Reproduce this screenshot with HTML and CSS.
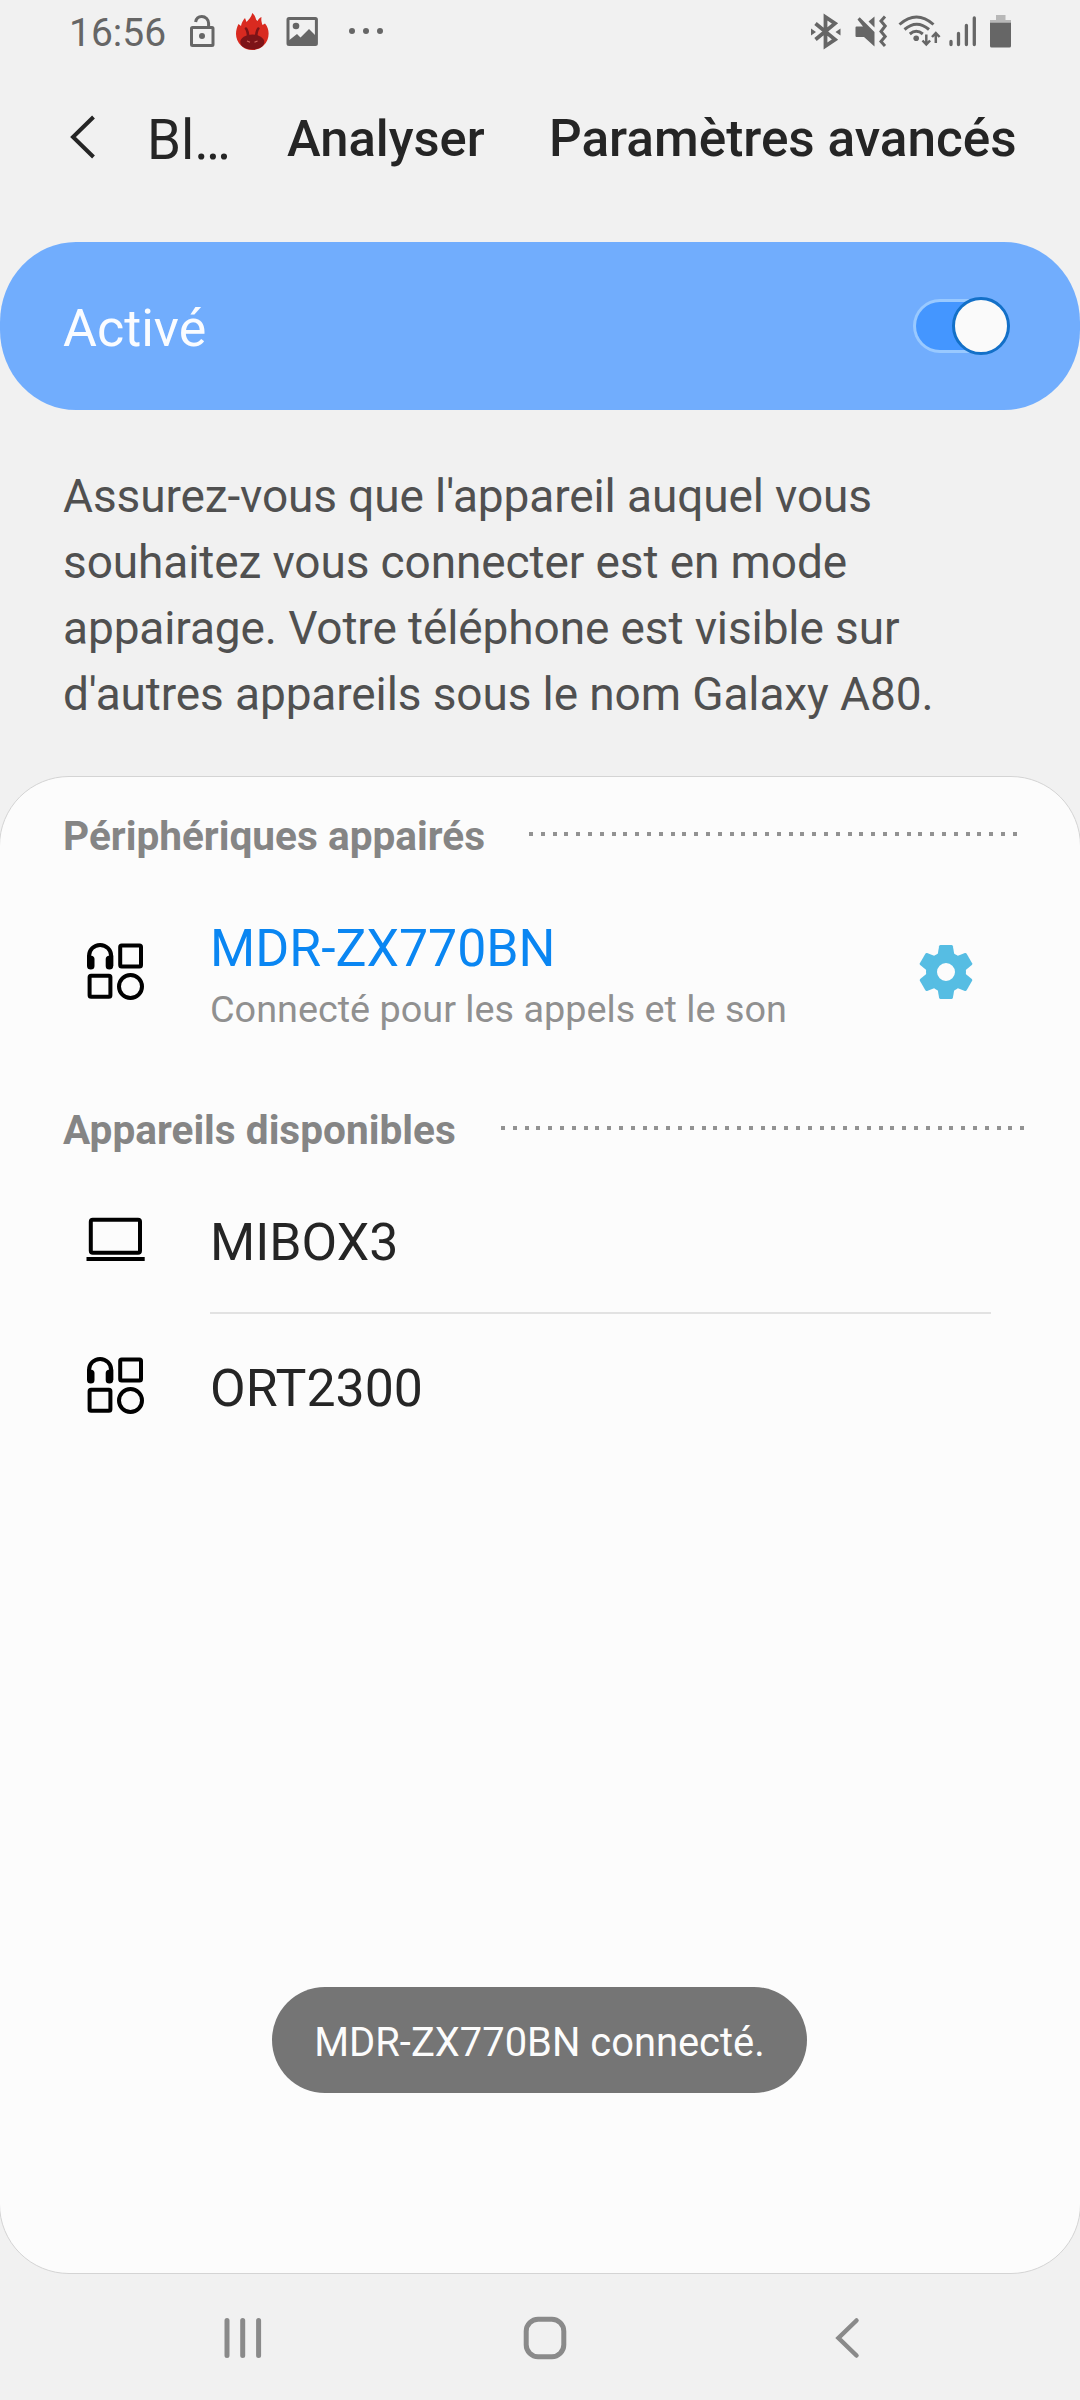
FILE: index.html
```html
<!DOCTYPE html>
<html lang="fr">
<head>
<meta charset="utf-8">
<title>Bluetooth</title>
<link rel="stylesheet" href="styles.css">
</head>
<body>
<div class="screen">
  <div class="status">
    <span class="time">16:56</span>
    <div class="notifications">
      <svg width="32" height="66" viewBox="186 0 32 66" fill="none" stroke="#666" stroke-width="3">
        <rect x="191.5" y="27.5" width="21.5" height="18" rx="1"/>
        <path d="M195.6 22c.6-3.600 3-5.500 6.200-5.500a6.800 6.800 0 0 1 6.800 6.800V27"/>
        <circle cx="202" cy="36" r="3" fill="#666" stroke="none"/>
      </svg>
      <svg width="37" height="66" viewBox="234 0 37 66">
        <path fill="#d92a20" d="M236 34c0-4 1-7 2.500-10l2.500 2c.5-3 2-6 4-8l1.500 4c2-2 5-5 5.800-9 2 1.500 3.200 4 4 7l1.500 1c.3-2 1.700-3 3.700-4-.5 3 0 5 1 8l2.500-1.500c2.500 3 3.600 6 3.600 10a16.300 16.300 0 0 1-32.600.5z"/>
        <ellipse cx="252.300" cy="42" rx="12" ry="7.500" fill="#7d1418"/>
        <path d="M246 28.500c1.500 2 2 4 2.200 9M258.300 28.500c-1.500 2-2 4-2.200 9" fill="none" stroke="#7d1418" stroke-width="2.600" stroke-linecap="round"/>
        <path d="M247 41l3 1.200M257.500 41l-3 1.200" stroke="#d2685f" stroke-width="1.200"/>
      </svg>
      <svg width="36" height="66" viewBox="284 0 36 66">
        <rect x="288" y="18.500" width="28.400" height="26" rx="1" fill="none" stroke="#666" stroke-width="3"/>
        <path fill="#666" d="M287.500 41.500l9.500-7.500 3.500 3.500 8.500-8.500 8 8V45h-29.500z"/>
        <circle cx="296" cy="26" r="3.300" fill="#666"/>
      </svg>
      <svg width="40" height="66" viewBox="346 0 40 66" fill="#666">
        <circle cx="352" cy="31" r="3"/><circle cx="366" cy="31" r="3"/><circle cx="380" cy="31" r="3"/>
      </svg>
    </div>
    <div class="system">
      <svg width="36" height="66" viewBox="808 0 36 66">
        <path d="M815.500 23.500L835 39.500l-9.500 6.500V17l9.500 6.500-19.500 16" fill="none" stroke="#666" stroke-width="3.800"/>
        <path d="M811 28.500l5 3.500-5 3.500zM840.500 28.500l-5 3.500 5 3.500z" fill="#666"/>
      </svg>
      <svg width="38" height="66" viewBox="852 0 38 66">
        <path fill="#666" d="M856.500 26.500h6.500l-5.500-7 2.200-2.200L874.500 32v14.500l-10.500-9.500h-7.500q-1 0-1-1v-8.500q0-1 1-1zM868.500 21.500l6-5v11z"/>
        <path d="M885 16.500l-4 4.500 4.200 5-4.200 5.500 4.200 5-4.200 5 4 4.500" fill="none" stroke="#666" stroke-width="3"/>
      </svg>
      <svg width="48" height="66" viewBox="896 0 48 66" fill="none" stroke="#666" stroke-width="3">
        <path d="M899.500 24.500q17-15 34 0M904.500 29.500q12.200-10.500 24.500 0M909.800 34q6.500-5.500 13 0"/>
        <circle cx="916.200" cy="38.300" r="2.800" fill="#666" stroke="none"/>
        <path stroke-width="2.500" d="M926.300 34.500v10M922.500 40.500l3.800 4 3.800-4M935.800 43V33M932 37l3.800-4 3.800 4"/>
      </svg>
      <svg width="32" height="66" viewBox="947 0 32 66" stroke="#666" stroke-width="3.300" stroke-linecap="round">
        <path d="M951 41.500v3M958.500 33.500v11M966.400 25.500v19M974.300 18v26.500"/>
      </svg>
      <svg width="25" height="66" viewBox="988 0 25 66">
        <path fill="#b8b8b8" d="M996 15h9.500v5h5.500v4h-21v-4h6z"/>
        <path fill="#666" d="M990 22.800h21V46q0 1.500-1.500 1.500h-18q-1.500 0-1.500-1.500z"/>
      </svg>
    </div>
  </div>

  <header class="header">
    <svg class="back" width="40" height="60" viewBox="64 107 40 60" fill="none" stroke="#252525" stroke-width="4"><path d="M93.500 117L73 137l20.500 20"/></svg>
    <h1 class="title">Bl…</h1>
    <span class="action action-scan">Analyser</span>
    <span class="action">Paramètres avancés</span>
  </header>

  <div class="banner">
    <span class="banner-label">Activé</span>
    <span class="switch"><span class="thumb"></span></span>
  </div>

  <p class="hint">Assurez-vous que l'appareil auquel vous<br>souhaitez vous connecter est en mode<br>appairage. Votre téléphone est visible sur<br>d'autres appareils sous le nom Galaxy A80.</p>

  <main class="card">
    <div class="section"><h2>Périphériques appairés</h2><i class="dots dots-paired"></i></div>
    <div class="row row-paired">
      <svg class="icon" width="60" height="60" viewBox="86 941 60 60">
        <g id="devices">
          <path d="M89 966v-10a11.100 11.100 0 0 1 22.200 0v10" fill="none" stroke="#000" stroke-width="4"/>
          <path d="M87 955.500h4q3.500.5 3.500 3.500v7q0 3.500-3.700 3.500T87 966zM113.200 955.500h-4q-3.500.5-3.500 3.500v7q0 3.500 3.700 3.500t3.800-3.500z"/>
          <g fill="none" stroke="#000" stroke-width="4">
            <rect x="120.200" y="945.400" width="20.800" height="21.200" rx="1.500"/>
            <rect x="89.600" y="975.800" width="20.800" height="21" rx="1.500"/>
            <circle cx="130.500" cy="986.500" r="11.500"/>
          </g>
        </g>
      </svg>
      <div class="names"><div class="name connected">MDR-ZX770BN</div><div class="detail">Connecté pour les appels et le son</div></div>
      <svg class="gear" width="60" height="60" viewBox="-30 -30 60 60" fill="#56bde3">
        <circle r="14.500" fill="none" stroke="#56bde3" stroke-width="11"/>
        <path id="tooth" d="M-8.500-16.500l1.600-9.300q.3-1.200 1.400-1.200h11q1.100 0 1.400 1.200l1.600 9.300z"/>
        <use href="#tooth" transform="rotate(60)"/><use href="#tooth" transform="rotate(120)"/><use href="#tooth" transform="rotate(180)"/><use href="#tooth" transform="rotate(240)"/><use href="#tooth" transform="rotate(300)"/>
      </svg>
    </div>
    <div class="section"><h2>Appareils disponibles</h2><i class="dots dots-available"></i></div>
    <div class="row row-first">
      <svg class="icon" width="60" height="60" viewBox="86 1209 60 60" fill="none" stroke="#000" stroke-width="4">
        <rect x="90.800" y="1219.800" width="49.200" height="33" rx="2"/><path d="M86.500 1259h58.200"/>
      </svg>
      <div class="names"><div class="name">MIBOX3</div></div>
    </div>
    <div class="row row-last">
      <svg class="icon" width="60" height="60" viewBox="86 941 60 60"><use href="#devices"/></svg>
      <div class="names"><div class="name">ORT2300</div></div>
    </div>
  </main>

  <nav class="nav">
    <svg width="46" height="56" viewBox="220 2310 46 56" stroke="#8a8a8a" stroke-width="5" stroke-linecap="round"><path d="M227 2320.500v35M242.700 2320.500v35M258.600 2320.500v35"/></svg>
    <svg width="54" height="56" viewBox="518 2310 54 56" fill="none" stroke="#8a8a8a" stroke-width="5"><rect x="526.200" y="2319.300" width="37.600" height="37.400" rx="12"/></svg>
    <svg width="34" height="56" viewBox="830 2310 34 56" fill="none" stroke="#8a8a8a" stroke-width="4.500" stroke-linecap="round"><path d="M856.500 2320.500L838.500 2338l18 17.500"/></svg>
  </nav>

  <div class="toast">MDR-ZX770BN connecté.</div>
</div>
</body>
</html>
```
FILE: styles.css
```css
* { box-sizing: border-box; }

body {
  margin: 0;
  background: #f1f1f1;
  font-family: Roboto, sans-serif;
}

.screen {
  position: relative;
  display: flex;
  flex-direction: column;
  width: 1080px;
  height: 2400px;
  overflow: hidden;
  color: #252525;
}

svg { display: block; flex: none; }
h1, h2, p { margin: 0; font-weight: 400; }

/* Status bar */
.status {
  display: flex;
  height: 66px;
  padding: 0 67px 0 69px;
}
.time {
  width: 117px;
  font-size: 39px;
  line-height: 67px;
  color: #666;
}
.notifications, .system { display: flex; }
.notifications { gap: 16px; }
.notifications svg:nth-child(3) { margin-left: -3px; }
.notifications svg:nth-child(4) { margin-left: 10px; }
.system { margin-left: auto; gap: 8px; }
.system svg:nth-child(3) { margin-left: -2px; }
.system svg:nth-child(4) { margin-left: -5px; }
.system svg:nth-child(5) { margin-left: 1px; }

/* Title bar */
.header {
  display: flex;
  align-items: center;
  height: 145px;
  margin-bottom: 31px;
  padding-left: 64px;
  white-space: nowrap;
}
.back { margin-top: -3px; }
.title {
  width: 140px;
  margin-left: 43px;
  padding-top: 3px;
  font-size: 54.6px;
}
.action { font-size: 51.3px; font-weight: 500; }
.action-scan { width: 262px; font-size: 50.7px; }

/* Bluetooth on/off */
.banner {
  display: flex;
  align-items: center;
  justify-content: space-between;
  height: 168px;
  padding: 0 70px 0 63px;
  border-radius: 76px / 80px;
  background: #71adfd;
}
.banner-label {
  padding-top: 4px;
  font-size: 52px;
  color: #fafcff;
}
.switch {
  display: flex;
  align-items: center;
  justify-content: flex-end;
  width: 97px;
  height: 54px;
  border: 3px solid #99c9ff;
  border-right: 0;
  border-radius: 27px;
  background: #4496ff;
}
.thumb {
  flex: none;
  width: 58px;
  height: 58px;
  border: 3px solid #1370c8;
  border-radius: 50%;
  background: #fafafa;
}

.hint {
  margin: 53px 0 49px;
  padding-left: 63px;
  font-size: 46px;
  line-height: 66px;
  letter-spacing: -0.11px;
  color: #505050;
}

/* Device list */
.card {
  flex: none;
  height: 1498px;
  margin: 0 -1px;
  border: 1px solid #d4d4d4;
  border-radius: 70px;
  background: #fcfcfc;
}
.section {
  display: flex;
  align-items: center;
  height: 120px;
  margin-top: -1px;
  padding-left: 63px;
}
.row-paired + .section { margin-top: 0; }
.section h2 {
  font-size: 40.6px;
  font-weight: 700;
  color: #858585;
}
.dots {
  height: 4px;
  margin: 0 0 4px auto;
  background: repeating-linear-gradient(90deg, #929292 0 4px, transparent 4px 11.8px);
}
.dots-paired { width: 488px; margin-right: 63px; }
.dots-available { width: 524px; margin-right: 55px; }

.row {
  display: flex;
  align-items: flex-start;
  padding-left: 86px;
}
.row-paired { height: 174px; padding-top: 22px; }
.row-paired .icon { margin-top: 23px; }
.row-first { height: 124px; padding-top: 23px; }
.row-first .icon { margin-top: -4px; }
.row-last { padding-top: 45px; }
.row-last .icon { margin-top: -4px; }
.names { margin-left: 64px; }
.row-first .names {
  width: 781px;
  height: 101px;
  border-bottom: 2px solid #e2e2e2;
}
.name { font-size: 51.8px; line-height: 60px; }
.connected { line-height: 62px; color: #0a86f2; }
.detail {
  margin-top: 6px;
  font-size: 37.8px;
  line-height: 46px;
  color: #909090;
}
.gear { margin: 24px 104px 0 auto; }

/* Navigation bar */
.nav {
  display: flex;
  padding: 36px 0 0 220px;
}
.nav svg:nth-child(2) { margin-left: 252px; }
.nav svg:nth-child(3) { margin-left: 258px; }

.toast {
  position: absolute;
  left: 272px;
  top: 1987px;
  width: 535px;
  height: 106px;
  border-radius: 53px;
  background: #757575;
  color: #fcfcfc;
  font-size: 39.9px;
  line-height: 112px;
  text-align: center;
}
```
